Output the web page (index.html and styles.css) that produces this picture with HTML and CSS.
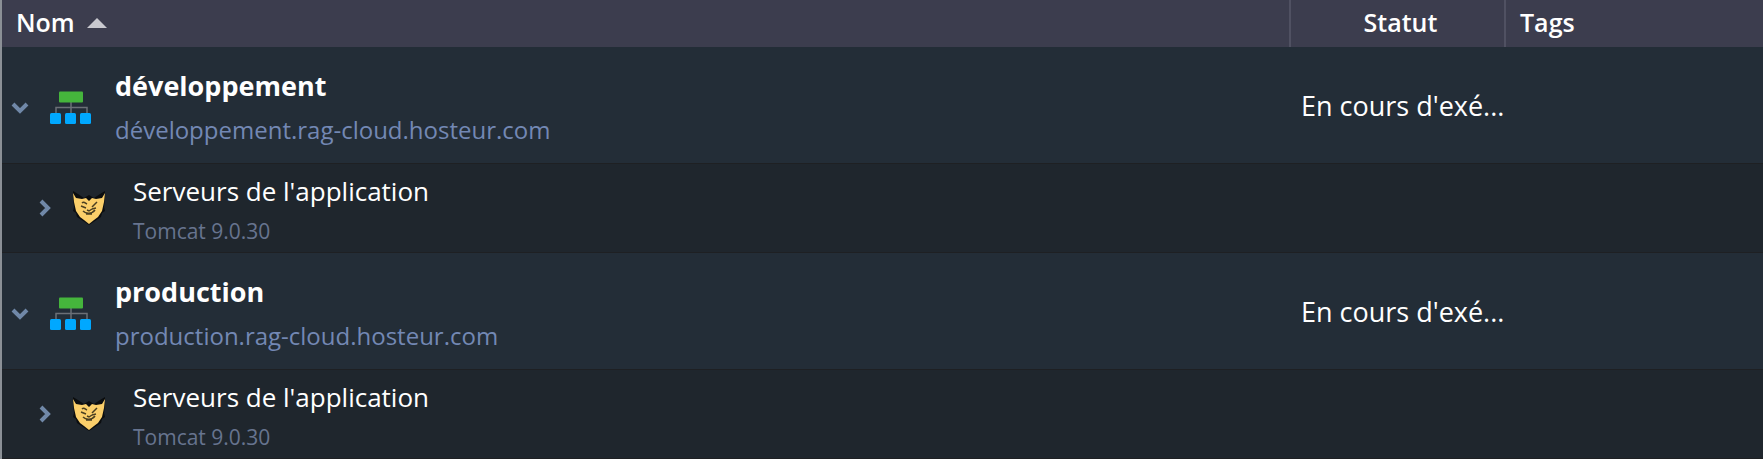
FILE: index.html
```html
<!DOCTYPE html>
<html lang="fr">
<head>
    <meta charset="UTF-8">
    <title>Environnements</title>
    <link rel="stylesheet" href="styles.css">
</head>

<body>
    <!-- icones communes -->
    <svg class="sprite" aria-hidden="true">
        <symbol id="chevron" viewBox="0 0 18 18">
            <path d="M2 5l7 7 7-7" fill="none" stroke="currentColor" stroke-width="4"/>
        </symbol>
        <symbol id="topology" viewBox="0 0 42 34">
            <path d="M21 11v11M6 22v-5.500h31V22" fill="none" stroke="#6b7077" stroke-width="1.500"/>
            <rect x="9" y="0.500" width="24" height="11" rx="1" fill="#45b53c"/>
            <rect x="0" y="22" width="11" height="11" rx="1.500" fill="#00a8ff"/>
            <rect x="15" y="22" width="11" height="11" rx="1.500" fill="#00a8ff"/>
            <rect x="30" y="22" width="11" height="11" rx="1.500" fill="#00a8ff"/>
        </symbol>
        <symbol id="tomcat" viewBox="0 0 34 34">
            <path d="M1 0l5 3 6 4 5-3 5 3 6-4 5-3v8l-1 8 1 4-3 2-1 4-6 4-6 4-6-4-6-4-1-4-3-2 1-4-1-8z" fill="#0b0d0f"/>
            <path d="M1 2l3 5 6 1 4-1 3 3 3-3 4 1 6-1 3-5-1 9-2 9-4 6-4 3-5 4-5-4-4-3-4-6-2-9z" fill="#fbcf6a"/>
            <path d="M10 12c2-2 3 0 5 1M9 15l5 2M25 11l-5 5M24 17l-4 1M15 19l2 1 3-2M11 20c3 3 9 3 12-1M14 23h6" fill="none" stroke="#4a3f22" stroke-width="1.500"/>
        </symbol>
    </svg>

    <table class="env-list">
        <colgroup>
            <col>
            <col class="col-status">
            <col class="col-tags">
        </colgroup>
        <thead>
            <tr>
                <th scope="col" aria-sort="ascending">
                    <button type="button" class="sort">Nom <span class="arrow"></span></button>
                </th>
                <th scope="col" class="status">Statut</th>
                <th scope="col">Tags</th>
            </tr>
        </thead>
        <tbody>
            <tr class="env">
                <td>
                    <div class="cell">
                        <button type="button" class="toggle" aria-label="Réduire développement" aria-expanded="true"><svg><use href="#chevron"/></svg></button>
                        <svg class="topology"><use href="#topology"/></svg>
                        <div class="info">
                            <strong class="name">développement</strong>
                            <a href="#" class="domain">développement.rag-cloud.hosteur.com</a>
                        </div>
                    </div>
                </td>
                <td class="status">En cours d'exé...</td>
                <td></td>
            </tr>
            <tr class="layer">
                <td>
                    <div class="cell">
                        <button type="button" class="toggle" aria-label="Développer les serveurs" aria-expanded="false"><svg><use href="#chevron"/></svg></button>
                        <svg class="tomcat"><use href="#tomcat"/></svg>
                        <div class="info">
                            <span class="name">Serveurs de l'application</span>
                            <span class="version">Tomcat 9.0.30</span>
                        </div>
                    </div>
                </td>
                <td></td>
                <td></td>
            </tr>
            <tr class="env">
                <td>
                    <div class="cell">
                        <button type="button" class="toggle" aria-label="Réduire production" aria-expanded="true"><svg><use href="#chevron"/></svg></button>
                        <svg class="topology"><use href="#topology"/></svg>
                        <div class="info">
                            <strong class="name">production</strong>
                            <a href="#" class="domain">production.rag-cloud.hosteur.com</a>
                        </div>
                    </div>
                </td>
                <td class="status">En cours d'exé...</td>
                <td></td>
            </tr>
            <tr class="layer">
                <td>
                    <div class="cell">
                        <button type="button" class="toggle" aria-label="Développer les serveurs" aria-expanded="false"><svg><use href="#chevron"/></svg></button>
                        <svg class="tomcat"><use href="#tomcat"/></svg>
                        <div class="info">
                            <span class="name">Serveurs de l'application</span>
                            <span class="version">Tomcat 9.0.30</span>
                        </div>
                    </div>
                </td>
                <td></td>
                <td></td>
            </tr>
        </tbody>
    </table>
</body>

</html>
```
FILE: styles.css
```css
*{
    margin: 0;
    padding: 0;
    box-sizing: border-box;
}
body{
    background-color: #1f262d;
    border-left: 2px solid #8b9096;
    font-family: "Open Sans", "Noto Sans", sans-serif;
    font-size: 26px;
    font-weight: 500;
    line-height: 32px;
    color: #fff;
}
button{
    background: none;
    border: 0;
    font: inherit;
    color: inherit;
    cursor: pointer;
}
.sprite{
    display: none;
}
.env-list{
    width: 100%;
    table-layout: fixed;
    border-collapse: separate;
    border-spacing: 0;
}
.col-status{
    width: 215px;
}
.col-tags{
    width: 259px;
}

th{
    height: 47px;
    padding: 0 14px 4px;
    background-color: #3c3d4e;
    font-size: 25px;
    font-weight: 600;
    text-align: left;
}
th + th{
    border-left: 2px solid #505162;
}
.sort{
    display: flex;
    align-items: center;
    gap: 12px;
}
.arrow{
    margin-top: 2px;
    border: 10px solid transparent;
    border-top: 0;
    border-bottom-color: #c9c9cf;
}
.status{
    padding-left: 6px;
    padding-right: 0;
    text-align: center;
    white-space: nowrap;
}

.env td{
    height: 116px;
    padding-top: 2px;
    background-color: #232d37;
}
.env .status{
    padding-left: 12px;
    font-size: 27px;
}
.layer td{
    height: 90px;
    background-color: #1f262d;
    border-top: 1px solid #1e2023;
    border-bottom: 1px solid #1e2023;
}
.cell{
    display: flex;
    align-items: center;
}
.env .cell{
    padding-top: 4px;
}
.toggle{
    width: 18px;
    height: 18px;
    color: #7088a8;
}
.toggle svg{
    display: block;
    width: 18px;
    height: 18px;
}
.env .toggle{
    margin: 0 21px 0 9px;
}
.layer .toggle{
    margin: 0 18px 0 34px;
    transform: rotate(-90deg);
}
.topology{
    width: 42px;
    height: 34px;
    margin-right: 23px;
}
.tomcat{
    width: 34px;
    height: 34px;
    margin-right: 27px;
}
.info{
    display: flex;
    flex-direction: column;
    align-items: flex-start;
}
.env .info{
    gap: 12px;
}
.layer .info{
    gap: 8px;
    padding-top: 6px;
}
.env .name{
    font-size: 27px;
}
.domain{
    font-size: 24px;
    font-weight: 400;
    color: #7388b4;
    text-decoration: none;
}
.version{
    font-size: 21px;
    color: #67748f;
}
```
